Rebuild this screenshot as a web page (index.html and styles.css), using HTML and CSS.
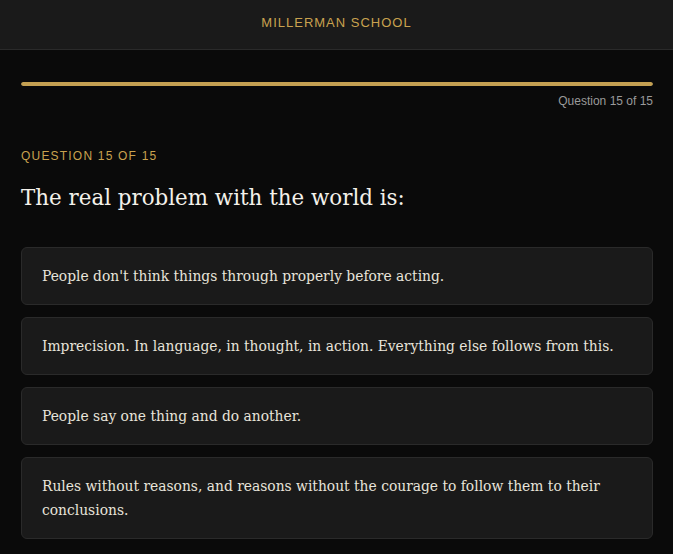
FILE: index.html
```html
<!DOCTYPE html>
<html lang="en">
<head>
<meta charset="utf-8">
<title>Millerman School</title>
<link rel="stylesheet" href="styles.css">
</head>
<body>
<header class="site-header">
  <div class="brand">MILLERMAN SCHOOL</div>
</header>
<main class="quiz">
  <div class="progress"><div class="progress-fill" style="width:100%"></div></div>
  <div class="progress-label">Question 15 of 15</div>
  <div class="eyebrow">QUESTION 15 OF 15</div>
  <h1 class="question">The real problem with the world is:</h1>
  <div class="options">
    <button class="option">People don't think things through properly before acting.</button>
    <button class="option">Imprecision. In language, in thought, in action. Everything else follows from this.</button>
    <button class="option">People say one thing and do another.</button>
    <button class="option">Rules without reasons, and reasons without the courage to follow them to their conclusions.</button>
  </div>
</main>
</body>
</html>
```
FILE: styles.css
```css
* { box-sizing: border-box; }
html, body { margin: 0; padding: 0; }
body {
  background: #0a0a0a;
  color: #e8e4da;
  font-family: "Liberation Sans", Arial, sans-serif;
}
.site-header {
  height: 50px;
  background: #1a1a1a;
  border-bottom: 1px solid #2a2a2a;
  display: flex;
  align-items: center;
  justify-content: center;
}
.brand {
  color: #c9a24f;
  font-size: 13px;
  letter-spacing: 1px;
  margin-top: -5px;
}
.quiz {
  padding: 32px 20px 20px 21px;
}
.progress {
  height: 4px;
  background: #2a2a2a;
  border-radius: 2px;
  overflow: hidden;
}
.progress-fill {
  height: 100%;
  background: #c4a052;
  border-radius: 2px;
}
.progress-label {
  text-align: right;
  color: #9a9a9a;
  font-size: 12px;
  line-height: 14px;
  margin-top: 8px;
}
.eyebrow {
  margin-top: 41px;
  color: #c9a24f;
  font-size: 12px;
  line-height: 14px;
  letter-spacing: 1.2px;
}
.question {
  margin: 21px 0 0;
  font-family: "DejaVu Serif", Georgia, serif;
  font-weight: normal;
  font-size: 21.4px;
  line-height: 28px;
  color: #f4f1ea;
}
.options {
  margin-top: 35px;
  display: flex;
  flex-direction: column;
  gap: 12px;
}
.option {
  display: block;
  width: 100%;
  text-align: left;
  background: #1a1a1a;
  border: 1px solid #2a2a2a;
  border-radius: 6px;
  padding: 16px 20px;
  font-family: "DejaVu Serif Condensed", "DejaVu Serif", Georgia, serif;
  font-size: 15.4px;
  line-height: 24px;
  color: #e8e4da;
}
```
